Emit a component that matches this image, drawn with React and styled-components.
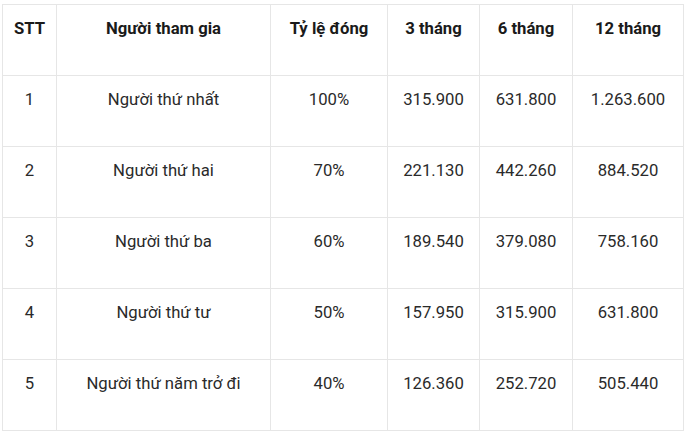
import React from "react";
import styled, { createGlobalStyle } from "styled-components";

const GlobalStyle = createGlobalStyle`
  html, body {
    margin: 0;
    padding: 0;
    background: #fff;
  }
  body {
    font-family: Roboto, "Liberation Sans", Arial, sans-serif;
    color: #222;
  }
`;

const Wrap = styled.div`
  padding: 4px 0 0 2px;
`;

const Table = styled.table`
  border-collapse: collapse;
  table-layout: fixed;
  width: 681px;
  font-size: 16.7px;
`;

const Cell = styled.td`
  border: 1px solid #e6e6e6;
  height: 71px;
  box-sizing: border-box;
  padding: 14px 4px 0;
  vertical-align: top;
  text-align: center;
  line-height: 20px;
  font-weight: ${(p) => (p.$head ? 700 : 400)};
  color: ${(p) => (p.$head ? "#1a1a1a" : "#2a2a2a")};
`;

const widths = [54, 214, 117, 92, 93, 111];

const head = ["STT", "Người tham gia", "Tỷ lệ đóng", "3 tháng", "6 tháng", "12 tháng"];

const rows = [
  ["1", "Người thứ nhất", "100%", "315.900", "631.800", "1.263.600"],
  ["2", "Người thứ hai", "70%", "221.130", "442.260", "884.520"],
  ["3", "Người thứ ba", "60%", "189.540", "379.080", "758.160"],
  ["4", "Người thứ tư", "50%", "157.950", "315.900", "631.800"],
  ["5", "Người thứ năm trở đi", "40%", "126.360", "252.720", "505.440"],
];

export default function App() {
  return (
    <>
      <GlobalStyle />
      <Wrap>
        <Table>
          <colgroup>
            {widths.map((w, i) => (
              <col key={i} style={{ width: w }} />
            ))}
          </colgroup>
          <tbody>
            <tr>
              {head.map((h) => (
                <Cell as="th" $head key={h}>
                  {h}
                </Cell>
              ))}
            </tr>
            {rows.map((r) => (
              <tr key={r[0]}>
                {r.map((c, i) => (
                  <Cell key={i}>{c}</Cell>
                ))}
              </tr>
            ))}
          </tbody>
        </Table>
      </Wrap>
    </>
  );
}
